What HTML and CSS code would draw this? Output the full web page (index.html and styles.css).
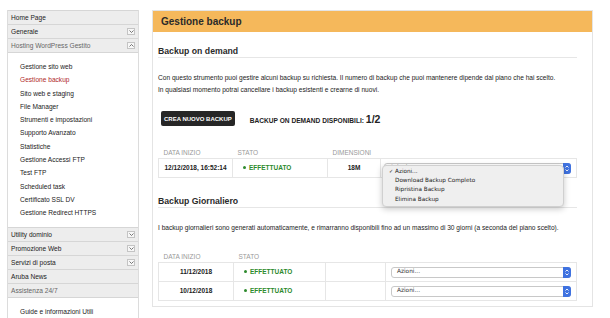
FILE: index.html
```html
<!DOCTYPE html>
<html>
<head>
  <title>Gestione backup</title>
  <link rel="stylesheet" href="styles.css">
</head>
<body>
  <nav class="sidebar">
    <div class="nav-row">Home Page</div>
    <div class="nav-row">Generale <span class="toggle down"></span></div>
    <div class="nav-row open">Hosting WordPress Gestito <span class="toggle up"></span></div>
    <ul class="submenu">
      <li>Gestione sito web</li>
      <li class="active">Gestione backup</li>
      <li>Sito web e staging</li>
      <li>File Manager</li>
      <li>Strumenti e impostazioni</li>
      <li>Supporto Avanzato</li>
      <li>Statistiche</li>
      <li>Gestione Accessi FTP</li>
      <li>Test FTP</li>
      <li>Scheduled task</li>
      <li>Certificato SSL DV</li>
      <li>Gestione Redirect HTTPS</li>
    </ul>
    <div class="nav-row">Utility dominio <span class="toggle down"></span></div>
    <div class="nav-row">Promozione Web <span class="toggle down"></span></div>
    <div class="nav-row">Servizi di posta <span class="toggle down"></span></div>
    <div class="nav-row">Aruba News</div>
    <div class="nav-row open">Assistenza 24/7</div>
    <ul class="submenu">
      <li>Guide e informazioni Utili</li>
    </ul>
  </nav>

  <main class="panel">
    <div class="panel-head">Gestione backup</div>
    <div class="panel-body">
      <h2>Backup on demand</h2>
      <p>Con questo strumento puoi gestire alcuni backup su richiesta. Il numero di backup che puoi mantenere dipende dal piano che hai scelto.<br>
      In qualsiasi momento potrai cancellare i backup esistenti e crearne di nuovi.</p>

      <div class="actions">
        <button class="btn">CREA NUOVO BACKUP</button>
        <span class="quota">BACKUP ON DEMAND DISPONIBILI: <b>1/2</b></span>
      </div>

      <table class="backups">
        <colgroup><col style="width:74px"><col style="width:95px"><col style="width:53px"><col></colgroup>
        <thead>
          <tr><th>DATA INIZIO</th><th>STATO</th><th>DIMENSIONI</th><th></th></tr>
        </thead>
        <tbody>
          <tr>
            <td class="date">12/12/2018, 16:52:14</td>
            <td class="state">EFFETTUATO</td>
            <td class="size">18M</td>
            <td class="cell-select">
              <div class="select">Azioni...<span class="arrows"></span></div>
              <ul class="menu">
                <li class="checked">Azioni...</li>
                <li>Download Backup Completo</li>
                <li>Ripristina Backup</li>
                <li>Elimina Backup</li>
              </ul>
            </td>
          </tr>
        </tbody>
      </table>

      <h2 class="daily-title">Backup Giornaliero</h2>
      <p>I backup giornalieri sono generati automaticamente, e rimarranno disponibili fino ad un massimo di 30 giorni (a seconda del piano scelto).</p>

      <table class="backups daily">
        <colgroup><col style="width:75px"><col style="width:92px"><col style="width:60px"><col></colgroup>
        <thead>
          <tr><th>DATA INIZIO</th><th>STATO</th><th></th><th></th></tr>
        </thead>
        <tbody>
          <tr>
            <td class="date">11/12/2018</td>
            <td class="state">EFFETTUATO</td>
            <td></td>
            <td class="cell-select"><div class="select">Azioni...<span class="arrows"></span></div></td>
          </tr>
          <tr>
            <td class="date">10/12/2018</td>
            <td class="state">EFFETTUATO</td>
            <td></td>
            <td class="cell-select"><div class="select">Azioni...<span class="arrows"></span></div></td>
          </tr>
        </tbody>
      </table>
    </div>
  </main>
</body>
</html>
```

FILE: styles.css
```css
html, body {
  margin: 0;
  background: #fff;
}

body {
  display: flex;
  align-items: flex-start;
  gap: 13px;
  padding: 10px 0 0 7px;
  font-family: "Liberation Sans", Arial, sans-serif;
  color: #222;
}

/* sidebar */

.sidebar {
  width: 130px;
  height: 320px;
  border: 1px solid #dcdcdc;
  border-top: 0;
  font-size: 6.6px;
}

.nav-row {
  display: flex;
  align-items: center;
  justify-content: space-between;
  height: 13px;
  padding: 0 3px 0 3px;
  background: #ededed;
  border-top: 1px solid #d6d6d6;
  color: #222;
}

.nav-row.open {
  color: #666;
}

.toggle {
  width: 6px;
  height: 5px;
  border: 1px solid #c4c4c4;
  background: #f7f7f7 no-repeat center / 5px 3px;
}

.toggle.down {
  background-image: url("data:image/svg+xml,%3Csvg xmlns='http://www.w3.org/2000/svg' viewBox='0 0 5 3'%3E%3Cpath d='M0.5 0.5L2.5 2.5L4.5 0.5' fill='none' stroke='%23555' stroke-width='0.8'/%3E%3C/svg%3E");
}

.toggle.up {
  background-image: url("data:image/svg+xml,%3Csvg xmlns='http://www.w3.org/2000/svg' viewBox='0 0 5 3'%3E%3Cpath d='M0.5 2.5L2.5 0.5L4.5 2.5' fill='none' stroke='%23555' stroke-width='0.8'/%3E%3C/svg%3E");
}

.submenu {
  list-style: none;
  margin: 0;
  padding: 7px 0 7px 12px;
  border-top: 1px solid #d6d6d6;
}

.submenu li {
  line-height: 13.3px;
}

.submenu li.active {
  color: #b02a2a;
}

/* main panel */

.panel {
  width: 439px;
  border: 1px solid #e4e4e4;
}

.panel-head {
  height: 21px;
  line-height: 22px;
  padding-left: 8px;
  background: #f5b85b;
  font-size: 10px;
  font-weight: bold;
  color: #2a2a2a;
}

.panel-body {
  padding: 0 15px 5px 5px;
}

h2 {
  margin: 14px 0 0;
  padding-bottom: 1px;
  line-height: 10px;
  font-size: 8.7px;
  border-bottom: 1px solid #e6e6e6;
  color: #2a2a2a;
}

h2.daily-title {
  margin-top: 18px;
}

p {
  margin: 14px 0 0;
  font-size: 6.6px;
  line-height: 12px;
}

.actions {
  display: flex;
  align-items: center;
  gap: 15px;
  margin-top: 15px;
  padding-left: 3px;
}

.btn {
  height: 15px;
  padding: 0 3px;
  border: 0;
  border-radius: 2px;
  background: #262626;
  color: #fff;
  font: bold 6px "Liberation Sans", Arial, sans-serif;
}

.quota {
  font-size: 6.6px;
  font-weight: bold;
}

.quota b {
  font-size: 10.5px;
}

/* tables */

.backups {
  width: 100%;
  margin-top: 20px;
  border-collapse: collapse;
  font-size: 6.5px;
}

.backups th {
  height: 12px;
  padding: 0 0 0 5px;
  text-align: left;
  font-weight: normal;
  color: #999;
}

.backups td {
  box-sizing: border-box;
  height: 19px;
  padding: 0;
  line-height: 10px;
  border: 1px solid #e6e6e6;
  font-weight: bold;
}

.backups.daily {
  margin-top: 16px;
}

.date,
.size {
  text-align: center;
}

.backups td.state {
  padding-left: 10px;
  color: #2d8a2d;
}

.state::before {
  content: "";
  display: inline-block;
  width: 3px;
  height: 3px;
  margin-right: 3px;
  vertical-align: 1px;
  border-radius: 50%;
  background: #2d8a2d;
}

.backups td.cell-select {
  position: relative;
  padding: 0 5px 0 3px;
}

.select {
  position: relative;
  height: 9px;
  line-height: 9px;
  padding-left: 5px;
  border: 1px solid #c8c8c8;
  border-radius: 3px;
  background: #fff;
  font: normal 5.8px "DejaVu Sans", sans-serif;
  color: #333;
}

.arrows {
  position: absolute;
  top: -1px;
  right: -1px;
  width: 8px;
  height: 11px;
  border-radius: 0 3px 3px 0;
  background: #3f72e0 url("data:image/svg+xml,%3Csvg xmlns='http://www.w3.org/2000/svg' viewBox='0 0 8 11'%3E%3Cpath d='M2.5 4.5L4 3L5.5 4.5M2.5 6.5L4 8L5.5 6.5' fill='none' stroke='%23fff' stroke-width='0.9'/%3E%3C/svg%3E") no-repeat center;
}

.daily td.cell-select {
  padding-left: 5px;
}

.menu {
  position: absolute;
  top: 6px;
  left: 1px;
  width: 180px;
  margin: 0;
  padding: 1px 0 2px;
  list-style: none;
  background: #efefef;
  border: 1px solid #d0d0d0;
  border-radius: 4px;
  box-shadow: 0 2px 6px rgba(0, 0, 0, 0.22);
  font: normal 5.7px "DejaVu Sans", sans-serif;
  color: #222;
}

.menu li {
  line-height: 9.2px;
  padding-left: 12px;
}

.menu li.checked {
  position: relative;
}

.menu li.checked::before {
  content: "\2713";
  position: absolute;
  left: 6px;
  font-size: 5px;
}
```
